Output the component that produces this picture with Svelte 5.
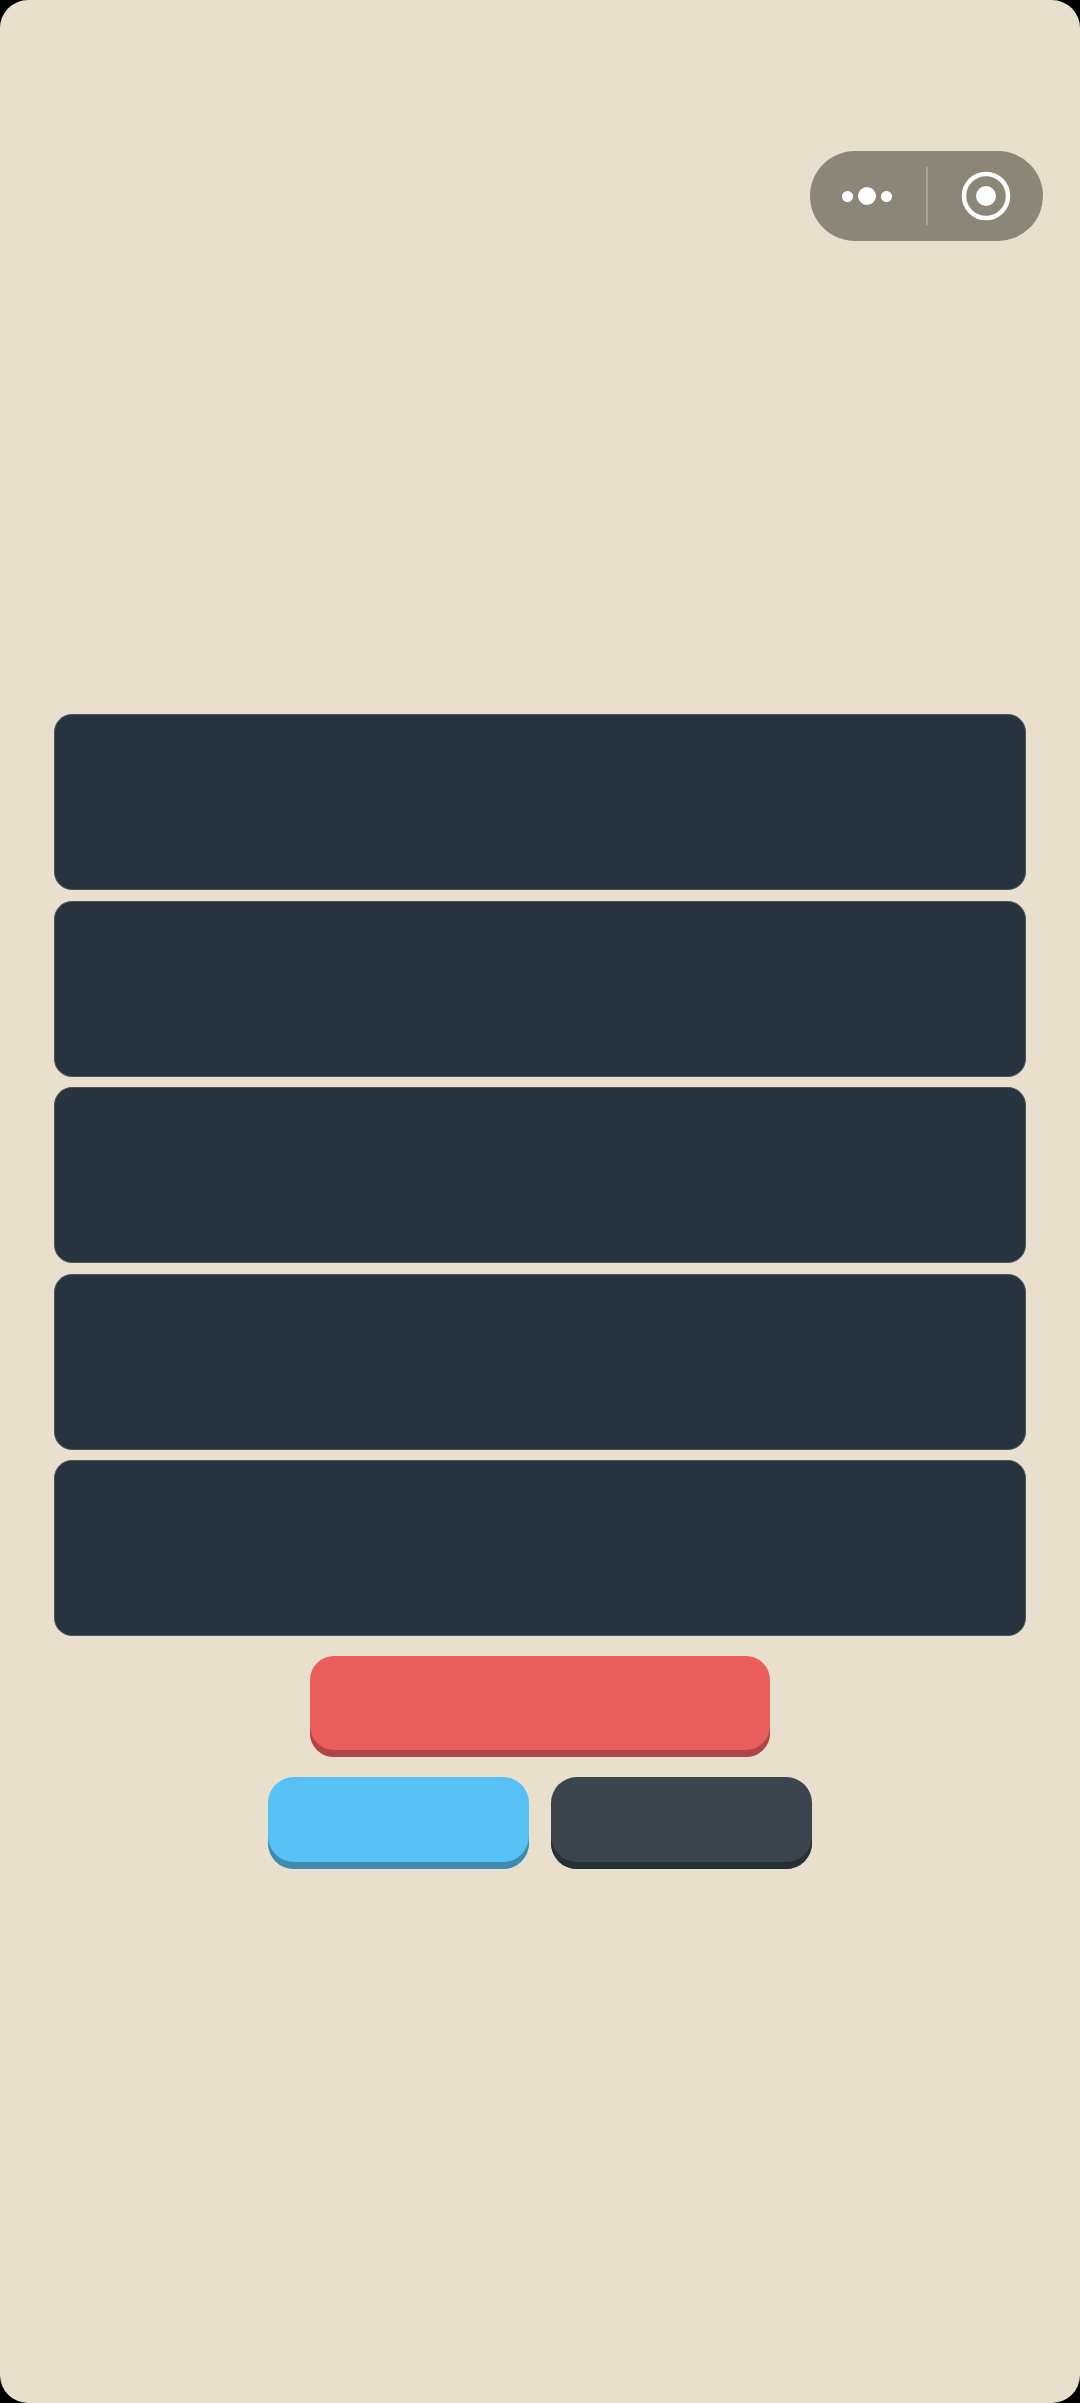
<script>
	const panels = [1, 2, 3, 4, 5];
</script>

<div class="screen">
	<div class="capsule">
		<div class="more">
			<span class="dot"></span>
			<span class="dot big"></span>
			<span class="dot"></span>
		</div>
		<span class="divider"></span>
		<div class="close">
			<svg width="50" height="50" viewBox="0 0 50 50">
				<circle cx="25" cy="25" r="22" fill="none" stroke="#fff" stroke-width="4.5" />
				<circle cx="25" cy="25" r="10" fill="#fff" />
			</svg>
		</div>
	</div>

	<div class="panels">
		{#each panels as panel (panel)}
			<div class="panel"></div>
		{/each}
	</div>

	<div class="actions">
		<button class="btn red"></button>
		<div class="row">
			<button class="btn blue"></button>
			<button class="btn dark"></button>
		</div>
	</div>
</div>

<style>
	:global(body) {
		background: #000;
	}

	.screen {
		position: relative;
		box-sizing: border-box;
		height: 2403px;
		padding-top: 714px;
		background: #e8e0cc;
		border-radius: 28px;
		overflow: hidden;
	}

	.capsule {
		position: absolute;
		top: 151px;
		left: 810px;
		width: 233px;
		height: 90px;
		display: flex;
		align-items: center;
		background: #8c8678;
		border-radius: 45px;
	}

	.more {
		width: 114px;
		margin-right: 2px;
		display: flex;
		align-items: center;
		justify-content: center;
		gap: 5px;
	}

	.dot {
		width: 11px;
		height: 11px;
		border-radius: 50%;
		background: #fff;
	}

	.dot.big {
		width: 18px;
		height: 18px;
	}

	.divider {
		width: 2px;
		height: 58px;
		background: #aaa597;
	}

	.close {
		flex: 1;
		display: flex;
		justify-content: center;
	}

	.close svg {
		display: block;
	}

	.panels {
		display: flex;
		flex-direction: column;
		gap: 10.5px;
		padding: 0 54px;
	}

	.panel {
		box-sizing: border-box;
		height: 176px;
		background: #27333f;
		border: 1px solid #4b555c;
		border-radius: 18px;
	}

	.actions {
		margin-top: 20px;
		display: flex;
		flex-direction: column;
		align-items: center;
		gap: 20px;
	}

	.row {
		display: flex;
		gap: 22px;
	}

	.btn {
		display: block;
		padding: 0;
		border: none;
		width: 261px;
		height: 92px;
		border-radius: 26px;
	}

	.red {
		width: 460px;
		height: 101px;
		border-radius: 24px;
		background: #e95d5b;
		box-shadow: inset 0 -7px 0 #b04547;
	}

	.blue {
		background: #57c1f6;
		box-shadow: inset 0 -7px 0 #3f8bb0;
	}

	.dark {
		background: #3a454e;
		box-shadow: inset 0 -7px 0 #262f38;
	}
</style>
